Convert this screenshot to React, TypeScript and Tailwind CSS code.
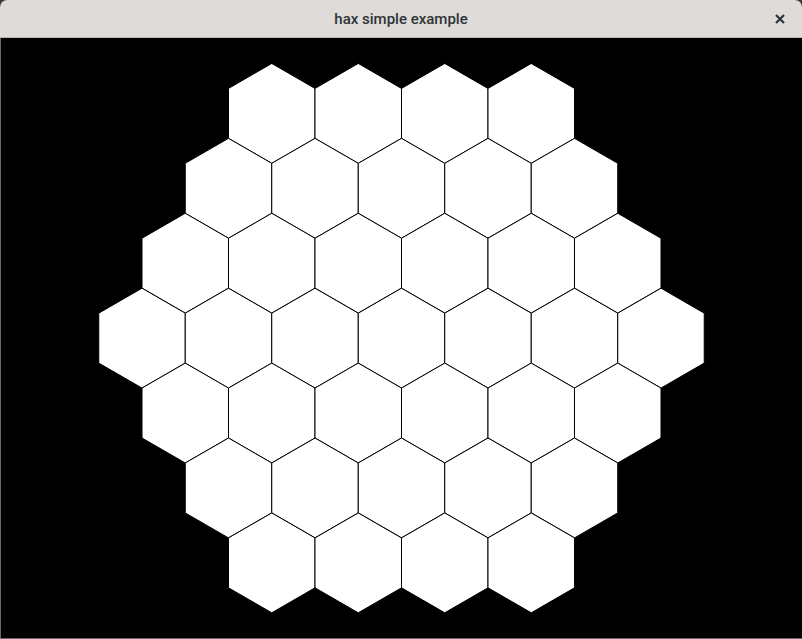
import React from "react";

const SIZE = 50;
const CX = 401;
const CY = 300.5;

function hexPoints(x: number, y: number, s: number) {
  const pts: string[] = [];
  for (let i = 0; i < 6; i++) {
    const a = (Math.PI / 180) * (60 * i - 90);
    pts.push(`${(x + s * Math.cos(a)).toFixed(2)},${(y + s * Math.sin(a)).toFixed(2)}`);
  }
  return pts.join(" ");
}

export default function App() {
  const hexes: { x: number; y: number; k: string }[] = [];
  const N = 3;
  for (let r = -N; r <= N; r++) {
    for (let q = -N; q <= N; q++) {
      const s = -q - r;
      if (Math.abs(s) > N) continue;
      hexes.push({
        x: CX + SIZE * Math.sqrt(3) * (q + r / 2),
        y: CY + SIZE * 1.5 * r,
        k: `${q}_${r}`,
      });
    }
  }
  return (
    <div className="w-[802px] h-[639px] bg-[#3a3a3a] overflow-hidden">
      <div className="w-full h-full flex flex-col rounded-t-[7px] overflow-hidden bg-black">
        <div className="h-[38px] shrink-0 bg-[#dedbd8] border-b border-[#b8b4b0] relative flex items-center justify-center">
          <span
            className="text-[15px] font-medium text-[#2e3436] pt-[2px]"
            style={{ fontFamily: 'Roboto, "Noto Sans", sans-serif' }}
          >
            hax simple example
          </span>
          <span className="absolute right-[14px] top-[11px] w-[16px] h-[16px] flex items-center justify-center">
            <svg width="12" height="12" viewBox="0 0 12 12">
              <path d="M2 2 L10 10 M10 2 L2 10" stroke="#2e3436" strokeWidth="2.2" strokeLinecap="butt" />
            </svg>
          </span>
        </div>
        <div className="flex-1 bg-black border-l border-b border-[#6a6a6a]">
          <svg width="100%" height="100%" viewBox="0 0 802 601" preserveAspectRatio="none" className="block">
            {hexes.map((h) => (
              <polygon key={h.k} points={hexPoints(h.x, h.y, SIZE)} fill="#ffffff" stroke="#000000" strokeWidth="1" />
            ))}
          </svg>
        </div>
      </div>
    </div>
  );
}
